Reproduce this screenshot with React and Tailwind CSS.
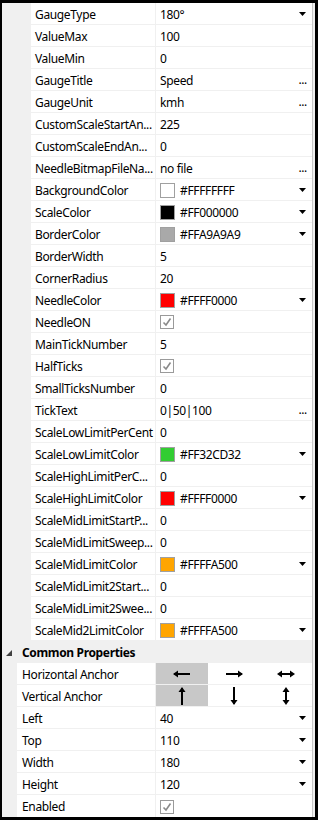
import React from "react";

const Arrow = () => (
  <svg width="8" height="5" viewBox="0 0 8 5" className="block">
    <path d="M0 0 H7 L3.5 4 Z" fill="#000" />
  </svg>
);

const Dots = () => <span className="text-[12px] leading-none">...</span>;

const Check = () => (
  <svg width="14" height="14" viewBox="0 0 14 14" className="block">
    <rect x="0.5" y="0.5" width="13" height="13" fill="#fff" stroke="#9a9a9a" />
    <path d="M3.5 7.5 L6 10 L10.5 3.5" fill="none" stroke="#8a8a8a" strokeWidth="1.6" />
  </svg>
);

const Swatch = ({ c }) => (
  <span className="w-[15px] h-[15px] border border-[#a0a0a0] mr-[5px] inline-block shrink-0" style={{ background: c }} />
);

const props = [
  ["GaugeType", "180°", "dd"],
  ["ValueMax", "100"],
  ["ValueMin", "0"],
  ["GaugeTitle", "Speed", "dots"],
  ["GaugeUnit", "kmh", "dots"],
  ["CustomScaleStartAn...", "225"],
  ["CustomScaleEndAn...", "0"],
  ["NeedleBitmapFileNa...", "no file", "dots"],
  ["BackgroundColor", "#FFFFFFFF", "dd", "#ffffff"],
  ["ScaleColor", "#FF000000", "dd", "#000000"],
  ["BorderColor", "#FFA9A9A9", "dd", "#a9a9a9"],
  ["BorderWidth", "5"],
  ["CornerRadius", "20"],
  ["NeedleColor", "#FFFF0000", "dd", "#ff0000"],
  ["NeedleON", null, "check"],
  ["MainTickNumber", "5"],
  ["HalfTicks", null, "check"],
  ["SmallTicksNumber", "0"],
  ["TickText", "0|50|100", "dots"],
  ["ScaleLowLimitPerCent", "0"],
  ["ScaleLowLimitColor", "#FF32CD32", "dd", "#32cd32"],
  ["ScaleHighLimitPerC...", "0"],
  ["ScaleHighLimitColor", "#FFFF0000", "dd", "#ff0000"],
  ["ScaleMidLimitStartP...", "0"],
  ["ScaleMidLimitSweep...", "0"],
  ["ScaleMidLimitColor", "#FFFFA500", "dd", "#ffa500"],
  ["ScaleMidLimit2Start...", "0"],
  ["ScaleMidLimit2Swee...", "0"],
  ["ScaleMid2LimitColor", "#FFFFA500", "dd", "#ffa500"],
];

const common = [
  ["Left", "40", "dd"],
  ["Top", "110", "dd"],
  ["Width", "180", "dd"],
  ["Height", "120", "dd"],
];

function Row({ name, value, kind, color, common: isCommon }) {
  return (
    <div className="flex h-[22px] shrink-0">
      <div className={`${isCommon ? "w-[15px]" : "w-[29px]"} bg-[#f0f0f0] shrink-0`} />
      <div className="flex-1 flex border-b border-[#f0f0f0]">
        <div
          className={`${isCommon ? "w-[139px] pl-[5px]" : "w-[125px] pl-[4px]"} pt-[2px] shrink-0 border-r border-[#f0f0f0] flex items-center whitespace-nowrap overflow-hidden`}
        >
          {name}
        </div>
        <div className="flex-1 flex items-center pl-[4px] pr-[5px] pt-[1px]">
          {kind === "check" ? (
            <Check />
          ) : (
            <>
              {color && <Swatch c={color} />}
              <span className="flex-1 whitespace-nowrap pt-[1px]">{value}</span>
              {kind === "dd" && <Arrow />}
              {kind === "dots" && <Dots />}
            </>
          )}
        </div>
      </div>
    </div>
  );
}

const HLeft = () => (
  <svg width="18" height="8" viewBox="0 0 18 8"><path d="M1 4 H17" stroke="#000" strokeWidth="2" /><path d="M0 4 L5 0.5 V7.5 Z" fill="#000" /></svg>
);
const HRight = () => (
  <svg width="18" height="8" viewBox="0 0 18 8"><path d="M1 4 H17" stroke="#000" strokeWidth="2" /><path d="M18 4 L13 0.5 V7.5 Z" fill="#000" /></svg>
);
const HBoth = () => (
  <svg width="18" height="8" viewBox="0 0 18 8"><path d="M2 4 H16" stroke="#000" strokeWidth="2" /><path d="M0 4 L5 0.5 V7.5 Z" fill="#000" /><path d="M18 4 L13 0.5 V7.5 Z" fill="#000" /></svg>
);
const VUp = () => (
  <svg width="8" height="18" viewBox="0 0 8 18"><path d="M4 1 V18" stroke="#000" strokeWidth="2" /><path d="M4 0 L0.5 5 H7.5 Z" fill="#000" /></svg>
);
const VDown = () => (
  <svg width="8" height="18" viewBox="0 0 8 18"><path d="M4 0 V17" stroke="#000" strokeWidth="2" /><path d="M4 18 L0.5 13 H7.5 Z" fill="#000" /></svg>
);
const VBoth = () => (
  <svg width="8" height="18" viewBox="0 0 8 18"><path d="M4 2 V16" stroke="#000" strokeWidth="2" /><path d="M4 0 L0.5 5 H7.5 Z" fill="#000" /><path d="M4 18 L0.5 13 H7.5 Z" fill="#000" /></svg>
);

function AnchorRow({ name, icons }) {
  return (
    <div className="flex h-[22px] shrink-0">
      <div className="w-[15px] bg-[#f0f0f0] shrink-0" />
      <div className="flex-1 flex border-b border-[#f0f0f0]">
        <div className="w-[139px] shrink-0 border-r border-[#f0f0f0] pl-[5px] pt-[2px] flex items-center whitespace-nowrap">
          {name}
        </div>
        <div className="flex-1 grid grid-cols-3">
          {icons.map((I, i) => (
            <div key={i} className={`flex items-center justify-center ${i === 0 ? "bg-[#c8c8c8]" : ""}`}>
              <I />
            </div>
          ))}
        </div>
      </div>
    </div>
  );
}

export default function App() {
  return (
    <div
      className="w-[318px] h-[820px] bg-white border-black border-l-2 border-t-[3px] border-r-[3px] border-b-[3px] flex overflow-hidden text-[12px] tracking-[-0.35px] text-black"
      style={{ fontFamily: '"Noto Sans", "Segoe UI", sans-serif' }}
    >
      <div className="flex-1 flex flex-col">
        {props.map(([n, v, k, c]) => (
          <Row key={n} name={n} value={v} kind={k} color={c} />
        ))}
        <div className="flex h-[22px] items-center bg-[#f0f0f0] shrink-0 pt-[2px]">
          <svg width="7" height="7" viewBox="0 0 7 7" className="ml-[4px] mr-[9px]"><path d="M6 0 V6 H0 Z" fill="#404040" /></svg>
          <span className="font-bold">Common Properties</span>
        </div>
        <AnchorRow name="Horizontal Anchor" icons={[HLeft, HRight, HBoth]} />
        <AnchorRow name="Vertical Anchor" icons={[VUp, VDown, VBoth]} />
        {common.map(([n, v, k]) => (
          <Row key={n} name={n} value={v} kind={k} common />
        ))}
        <div className="flex h-[22px] shrink-0">
          <div className="w-[15px] bg-[#f0f0f0] shrink-0" />
          <div className="w-[139px] shrink-0 border-r border-[#f0f0f0] pl-[5px] pt-[2px] flex items-center">Enabled</div>
          <div className="flex-1 flex items-center pl-[4px] pt-[1px]"><Check /></div>
        </div>
      </div>
      <div className="w-[3px] bg-[#f0f0f0] border-l border-[#c8c8c8]" />
    </div>
  );
}
